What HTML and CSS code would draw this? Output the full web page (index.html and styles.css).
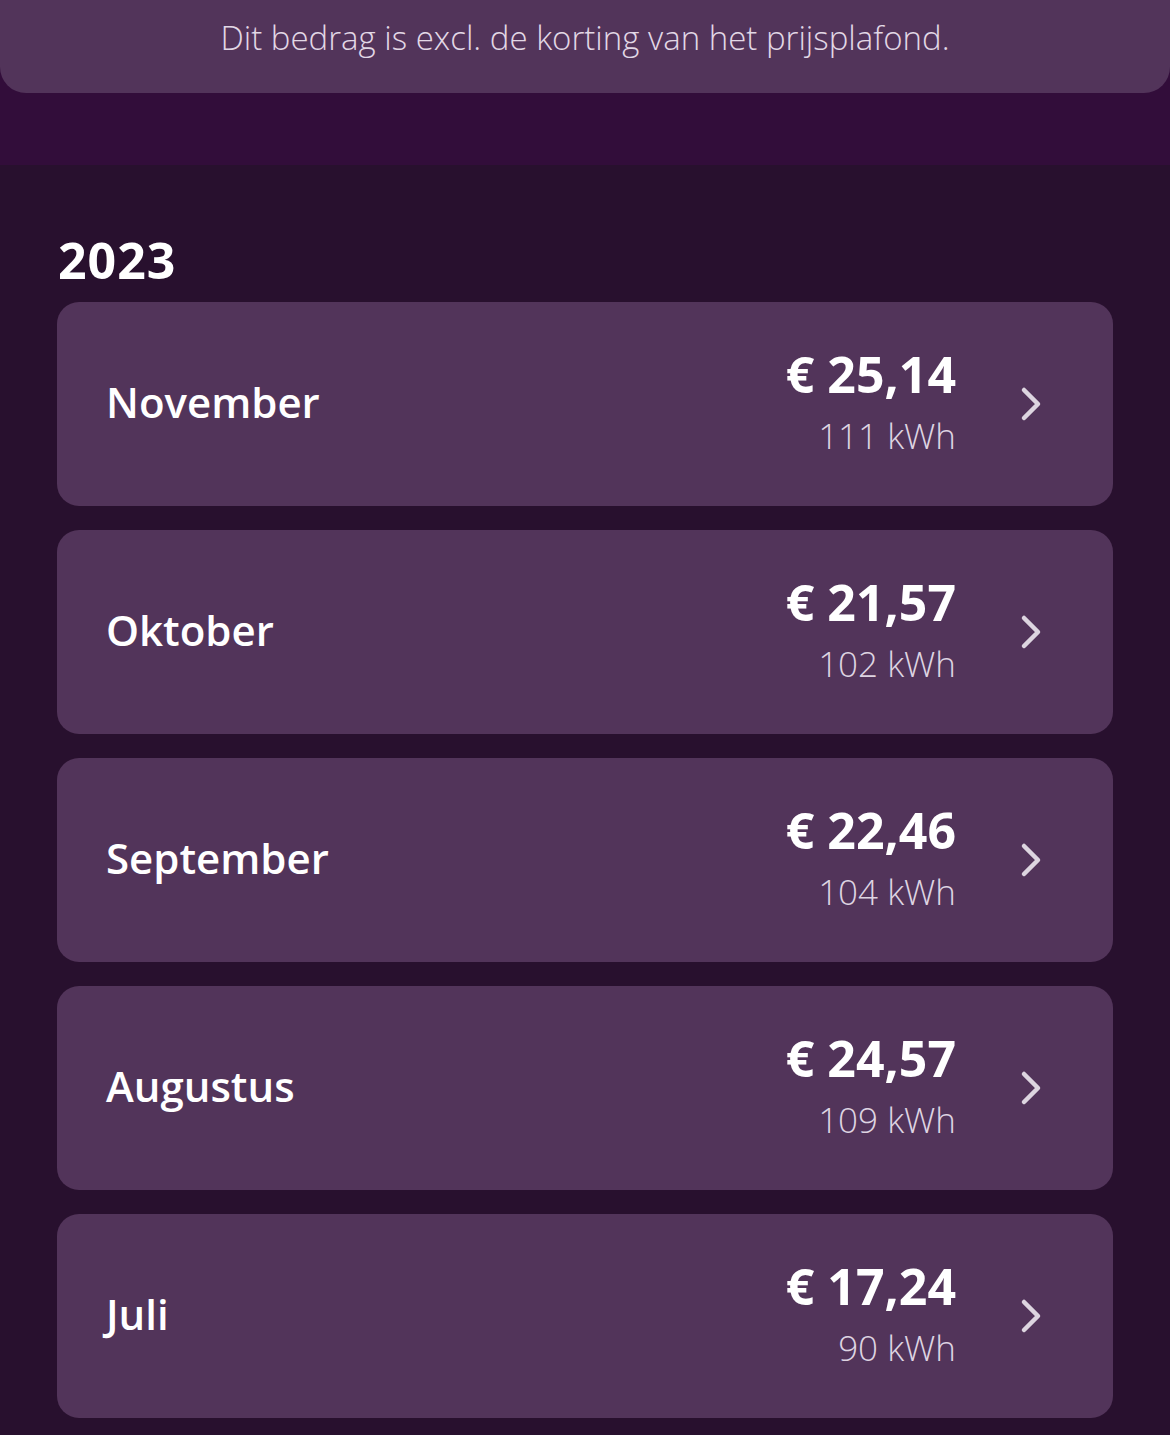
FILE: index.html
```
<!doctype html>
<html lang="nl">

<head>
  <title>Verbruik per maand</title>
  <meta charset="utf-8">
  <meta name="viewport" content="width=device-width, initial-scale=1">
  <link rel="stylesheet" href="styles.css">
</head>

<body>
  <div class="top">
    <div class="notice">Dit bedrag is excl. de korting van het prijsplafond.</div>
  </div>

  <div class="content">
    <div class="year">2023</div>

    <div class="months">
      <div class="month-card">
        <div class="month-name">November</div>
        <div class="month-values">
          <div class="amount">€ 25,14</div>
          <div class="usage">111 kWh</div>
        </div>
        <svg class="chevron" viewBox="0 0 24 36" width="24" height="36"><path d="M5 4 L19 18 L5 32" /></svg>
      </div>
      <div class="month-card">
        <div class="month-name">Oktober</div>
        <div class="month-values">
          <div class="amount">€ 21,57</div>
          <div class="usage">102 kWh</div>
        </div>
        <svg class="chevron" viewBox="0 0 24 36" width="24" height="36"><path d="M5 4 L19 18 L5 32" /></svg>
      </div>
      <div class="month-card">
        <div class="month-name">September</div>
        <div class="month-values">
          <div class="amount">€ 22,46</div>
          <div class="usage">104 kWh</div>
        </div>
        <svg class="chevron" viewBox="0 0 24 36" width="24" height="36"><path d="M5 4 L19 18 L5 32" /></svg>
      </div>
      <div class="month-card">
        <div class="month-name">Augustus</div>
        <div class="month-values">
          <div class="amount">€ 24,57</div>
          <div class="usage">109 kWh</div>
        </div>
        <svg class="chevron" viewBox="0 0 24 36" width="24" height="36"><path d="M5 4 L19 18 L5 32" /></svg>
      </div>
      <div class="month-card">
        <div class="month-name">Juli</div>
        <div class="month-values">
          <div class="amount">€ 17,24</div>
          <div class="usage">90 kWh</div>
        </div>
        <svg class="chevron" viewBox="0 0 24 36" width="24" height="36"><path d="M5 4 L19 18 L5 32" /></svg>
      </div>
    </div>
  </div>
</body>

</html>
```

FILE: styles.css
```
html {
  height: 100%;
}

body {
  margin: 0;
  padding: 0;
  min-height: 100%;
  background-color: #28102e;
  font-family: 'Open Sans', 'Noto Sans', sans-serif;
  color: #ffffff;
}

.top {
  height: 165px;
  background-color: #320d3a;
}

.notice {
  height: 93px;
  box-sizing: border-box;
  padding-top: 15px;
  background-color: #52345a;
  border-radius: 0 0 26px 26px;
  text-align: center;
  font-size: 33px;
  font-weight: 300;
  color: #e2d8e6;
}

.content {
  padding: 70px 57px 0 57px;
}

.year {
  font-size: 50px;
  font-weight: 700;
  line-height: 1;
  letter-spacing: 1px;
  padding-left: 1px;
  margin-bottom: 17px;
}

.months {
  display: flex;
  flex-direction: column;
  gap: 24px;
}

.month-card {
  height: 204px;
  box-sizing: border-box;
  background-color: #52345a;
  border-radius: 22px;
  display: flex;
  align-items: center;
  padding: 0 70px 0 49px;
}

.month-name {
  flex: 1;
  font-size: 42px;
  font-weight: 600;
  margin-bottom: 6px;
}

.month-values {
  text-align: right;
  margin-right: 63px;
  padding-top: 2px;
}

.amount {
  font-size: 50px;
  font-weight: 700;
  line-height: 58px;
}

.usage {
  font-size: 35px;
  font-weight: 300;
  line-height: 58px;
  padding-top: 4px;
  color: #ded4e2;
}

.chevron {
  fill: none;
  stroke: #ddd5e0;
  stroke-width: 4.5;
  stroke-linecap: round;
  stroke-linejoin: round;
}
```
